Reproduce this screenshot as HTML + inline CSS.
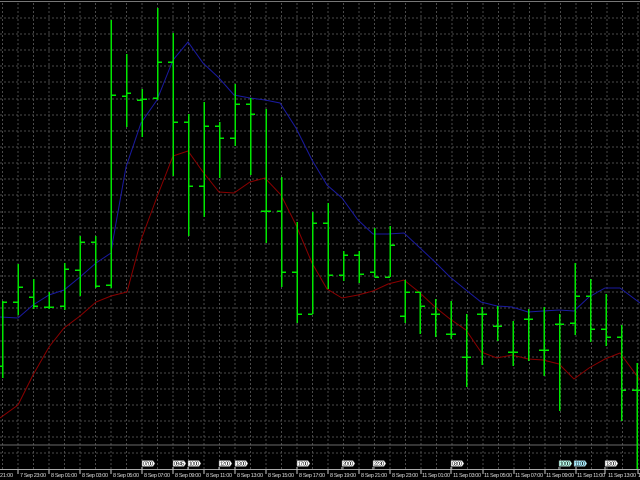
<!DOCTYPE html>
<html><head><style>
html,body{margin:0;padding:0;background:#000;width:640px;height:480px;overflow:hidden}
svg{display:block}
text{font-family:"Liberation Sans",sans-serif}
</style></head><body>
<svg width="640" height="480" viewBox="0 0 640 480" xmlns="http://www.w3.org/2000/svg">
<rect width="640" height="480" fill="#000"/>
<line x1="0" y1="1.5" x2="640" y2="1.5" stroke="#777" stroke-width="1"/>
<g stroke="#4a4a4a" stroke-width="1" stroke-dasharray="2,2" shape-rendering="crispEdges">
<path d="M0 18H640M0 34H640M0 50H640M0 66H640M0 82H640M0 99H640M0 115H640M0 131H640M0 147H640M0 163H640M0 179H640M0 195H640M0 212H640M0 228H640M0 244H640M0 260H640M0 276H640M0 292H640M0 308H640M0 325H640M0 341H640M0 357H640M0 373H640M0 389H640M0 405H640M0 421H640M0 437H640M0 453H640"/>
<path d="M2.5 3V469M18 3V469M33.5 3V469M49 3V469M64.5 3V469M80 3V469M95.5 3V469M111 3V469M126.5 3V469M142 3V469M157.5 3V469M173 3V469M188.5 3V469M204 3V469M219.5 3V469M235 3V469M250.5 3V469M266 3V469M281.5 3V469M297 3V469M312.5 3V469M328 3V469M343.5 3V469M359 3V469M374.5 3V469M390 3V469M405.5 3V469M421 3V469M436.5 3V469M452 3V469M467.5 3V469M483 3V469M498.5 3V469M514 3V469M529.5 3V469M545 3V469M560.5 3V469M576 3V469M591.5 3V469M607 3V469M622.5 3V469M638 3V469"/>
</g>
<line x1="0" y1="445" x2="640" y2="445" stroke="#6a6a6a" stroke-width="1"/>
<polyline fill="none" stroke="#8b0000" stroke-width="1" points="0,418 18,405 33,375 49,347 64,328 80,316 96,302 111,296 127,292 141,240 157,197 173,156 188,151 203,172 219,192 234,193 250,182 265,178 281,195 296,225 312,263 327,289 342,298 358,295 373,291 388,284 404,280 419,292 435,307 450,319 466,330 481,352 497,358 512,355 528,359 543,360 559,364 574,379 589,368 605,359 620,353 640,380"/>
<polyline fill="none" stroke="#1a1aa0" stroke-width="1" points="0,317 18,318 33,305 49,295 64,290 80,277 96,263 111,253 113,240 126,167 141,123 157,100 173,60 188,42 203,63 219,78 234,95 250,98 265,100 280,103 296,128 312,160 327,185 342,198 358,220 373,234 388,234 404,233 419,247 435,262 450,277 466,290 481,302 497,306 512,307 528,312 543,311 559,310 574,311 589,297 605,288 620,288 640,303"/>
<g stroke="#00e600" stroke-width="1.5" fill="none" shape-rendering="crispEdges">
<path d="M2.5 301V378M-2 366H2.5M2.5 302H7"/>
<path d="M18 264V315M13 302H18M18 287H23"/>
<path d="M33.5 279V309M29 297H33.5M33.5 306H38"/>
<path d="M49 292V309M44 307H49M49 307H54"/>
<path d="M64.5 263V310M60 306H64.5M64.5 269H69"/>
<path d="M80 236V296M75 270H80M80 242H85"/>
<path d="M95.5 236V288M91 242H95.5M95.5 286H100"/>
<path d="M111 20V288M106 285H111M111 95H116"/>
<path d="M126.5 54V127M122 96H126.5M126.5 93H131"/>
<path d="M142 89V137M137 100H142M142 99H147"/>
<path d="M157.5 8V100M153 98H157.5M157.5 62H162"/>
<path d="M173 33V176M168 62H173M173 122H178"/>
<path d="M188.5 114V236M184 122H188.5M188.5 186H193"/>
<path d="M204 102V217M199 186H204M204 126H209"/>
<path d="M219.5 122V178M215 126H219.5M219.5 138H224"/>
<path d="M235 84V146M230 138H235M235 104H240"/>
<path d="M250.5 98V175M246 104H250.5M250.5 114H255"/>
<path d="M266 109V243M261 211H266M266 211H271"/>
<path d="M281.5 177V287M277 211H281.5M281.5 272H286"/>
<path d="M297 222V323M292 272H297M297 314H302"/>
<path d="M312.5 212V314M308 314H312.5M312.5 223H317"/>
<path d="M328 203V289M323 223H328M328 275H333"/>
<path d="M343.5 251V281M339 275H343.5M343.5 255H348"/>
<path d="M359 251V283M354 255H359M359 274H364"/>
<path d="M374.5 228V277M370 272H374.5M374.5 277H379"/>
<path d="M390 226V277M385 277H390M390 245H395"/>
<path d="M405 280V323M400 316H405M405 292H410"/>
<path d="M420 292V334M415 292H420M420 306H425"/>
<path d="M435.5 299V337M431 314H435.5M435.5 314H440"/>
<path d="M451 301V339M446 334H451M451 334H456"/>
<path d="M466.5 314V387M462 357H466.5M466.5 357H471"/>
<path d="M482 307V365M477 314H482M482 314H487"/>
<path d="M497.5 306V341M493 326H497.5M497.5 326H502"/>
<path d="M513 321V366M508 352H513M513 352H518"/>
<path d="M528.5 309V361M524 319H528.5M528.5 319H533"/>
<path d="M544 307V376M539 350H544M544 350H549"/>
<path d="M559.5 314V411M555 324H559.5M559.5 324H564"/>
<path d="M575 263V335M570 323H575M575 296H580"/>
<path d="M590.5 279V342M586 296H590.5M590.5 329H595"/>
<path d="M606 294V346M601 329H606M606 337H611"/>
<path d="M621.5 325V421M617 337H621.5M621.5 390H626"/>
<path d="M637 363V470M632 390H637M637 390H642"/>
</g>
<line x1="0" y1="469.5" x2="640" y2="469.5" stroke="#aaa" stroke-width="1"/>
<g fill="#fff" stroke="#555" stroke-width="0.5" font-size="5">
<g><path d="M142 460.5H153L155 463.5L153 466.5H142Z"/><text x="143" y="465.5" fill="#000" stroke="none" textLength="10">07:00</text></g>
<g><path d="M173 460.5H184L186 463.5L184 466.5H173Z"/><text x="174" y="465.5" fill="#000" stroke="none" textLength="10">09:45</text></g>
<g><path d="M188 460.5H199L201 463.5L199 466.5H188Z"/><text x="189" y="465.5" fill="#000" stroke="none" textLength="10">10:00</text></g>
<g><path d="M219 460.5H230L232 463.5L230 466.5H219Z"/><text x="220" y="465.5" fill="#000" stroke="none" textLength="10">12:00</text></g>
<g><path d="M235 460.5H246L248 463.5L246 466.5H235Z"/><text x="236" y="465.5" fill="#000" stroke="none" textLength="10">13:00</text></g>
<g><path d="M297 460.5H308L310 463.5L308 466.5H297Z"/><text x="298" y="465.5" fill="#000" stroke="none" textLength="10">17:00</text></g>
<g><path d="M342 460.5H353L355 463.5L353 466.5H342Z"/><text x="343" y="465.5" fill="#000" stroke="none" textLength="10">20:00</text></g>
<g><path d="M373 460.5H384L386 463.5L384 466.5H373Z"/><text x="374" y="465.5" fill="#000" stroke="none" textLength="10">22:30</text></g>
<g><path d="M451 460.5H462L464 463.5L462 466.5H451Z"/><text x="452" y="465.5" fill="#000" stroke="none" textLength="10">03:00</text></g>
<g fill="#bfe"><path d="M559 460.5H570L572 463.5L570 466.5H559Z"/><text x="560" y="465.5" fill="#000" stroke="none" textLength="10">10:00</text></g>
<g fill="#aef"><path d="M574 460.5H585L587 463.5L585 466.5H574Z"/><text x="575" y="465.5" fill="#000" stroke="none" textLength="10">11:00</text></g>
<g><path d="M605 460.5H616L618 463.5L616 466.5H605Z"/><text x="606" y="465.5" fill="#000" stroke="none" textLength="10">13:00</text></g>
</g>
<g stroke="#ccc" stroke-width="1" shape-rendering="crispEdges">
<path d="M18 470V474M49 470V474M80 470V474M111 470V474M142 467V474M173 467V474M188 467V470M204 470V474M219 467V470M235 467V474M266 470V474M297 467V474M328 470V474M342 467V470M359 470V474M373 467V470M390 470V474M421 470V474M451 467V474M483 470V474M514 470V474M545 470V474M559 467V470M576 467V474M605 467V474M638 470V474"/>
</g>
<g fill="#ddd" font-size="5.5">
<text x="0" y="477" textLength="13">21:00</text>
<text x="20" y="477" textLength="26">7 Sep 23:00</text>
<text x="51" y="477" textLength="26">8 Sep 01:00</text>
<text x="82" y="477" textLength="26">8 Sep 03:00</text>
<text x="113" y="477" textLength="26">8 Sep 05:00</text>
<text x="144" y="477" textLength="26">8 Sep 07:00</text>
<text x="175" y="477" textLength="26">8 Sep 09:00</text>
<text x="206" y="477" textLength="26">8 Sep 11:00</text>
<text x="237" y="477" textLength="26">8 Sep 13:00</text>
<text x="268" y="477" textLength="26">8 Sep 15:00</text>
<text x="299" y="477" textLength="26">8 Sep 17:00</text>
<text x="330" y="477" textLength="26">8 Sep 19:00</text>
<text x="361" y="477" textLength="26">8 Sep 21:00</text>
<text x="392" y="477" textLength="26">8 Sep 23:00</text>
<text x="422" y="477" textLength="28">11 Sep 01:00</text>
<text x="453" y="477" textLength="28">11 Sep 03:00</text>
<text x="484" y="477" textLength="28">11 Sep 05:00</text>
<text x="515" y="477" textLength="28">11 Sep 07:00</text>
<text x="546" y="477" textLength="28">11 Sep 09:00</text>
<text x="577" y="477" textLength="28">11 Sep 11:00</text>
<text x="608" y="477" textLength="28">11 Sep 13:00</text>
<text x="638" y="477">1</text>
</g>
</svg>
</body></html>
